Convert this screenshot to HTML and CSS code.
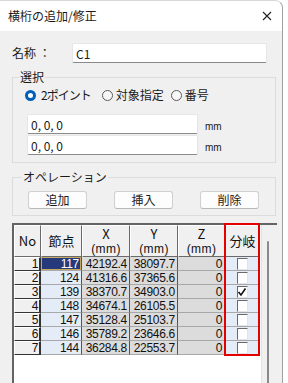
FILE: index.html
```html
<!DOCTYPE html>
<html>
<head>
  <meta charset="UTF-8">
  <title>横桁の追加/修正</title>
  <link rel="stylesheet" href="styles.css">
</head>
<body>
  <div class="window">
    <div class="titlebar">
      <span class="title">横桁の追加/修正</span>
      <svg class="close" width="10" height="10" viewBox="0 0 10 10">
        <path d="M1 1 L9 9 M9 1 L1 9" stroke="#222" stroke-width="1.1" fill="none"/>
      </svg>
    </div>

    <div class="content">
      <div class="name-row">
        <span class="name-label">名称 ：</span>
        <input class="textbox name-box" type="text" value="C1">
      </div>

      <fieldset class="group">
        <legend>選択</legend>
        <div class="radios">
          <label class="radio first"><span class="dot on"></span>2ポイント</label>
          <label class="radio"><span class="dot"></span>対象指定</label>
          <label class="radio"><span class="dot"></span>番号</label>
        </div>
        <div class="point-row first">
          <input class="textbox point-box" type="text" value="0, 0, 0">
          <span class="unit">mm</span>
        </div>
        <div class="point-row">
          <input class="textbox point-box" type="text" value="0, 0, 0">
          <span class="unit">mm</span>
        </div>
      </fieldset>

      <fieldset class="group ops">
        <legend>オペレーション</legend>
        <div class="buttons">
          <button>追加</button>
          <button>挿入</button>
          <button>削除</button>
        </div>
      </fieldset>

      <div class="grid">
        <div class="cells">
          <table>
            <colgroup>
              <col class="c-no"><col class="c-node"><col class="c-x"><col class="c-y"><col class="c-z"><col class="c-br">
            </colgroup>
            <thead>
              <tr>
                <th>No</th>
                <th>節点</th>
                <th>X<br><span class="mm">(mm)</span></th>
                <th>Y<br><span class="mm">(mm)</span></th>
                <th>Z<br><span class="mm">(mm)</span></th>
                <th>分岐</th>
              </tr>
            </thead>
            <tbody id="rows"></tbody>
          </table>
          <div class="highlight"></div>
        </div>
        <div class="scroll"><div class="thumb"></div></div>
      </div>
    </div>
  </div>

  <script>
  const rows = [
    [1, 117, "42192.4", "38097.7", 0, false],
    [2, 124, "41316.6", "37365.6", 0, false],
    [3, 139, "38370.7", "34903.0", 0, true],
    [4, 148, "34674.1", "26105.5", 0, false],
    [5, 147, "35128.4", "25103.7", 0, false],
    [6, 146, "35789.2", "23646.6", 0, false],
    [7, 144, "36284.8", "22553.7", 0, false]
  ];
  const body = document.getElementById("rows");
  rows.forEach(r => {
    const tr = body.insertRow();
    const check = r[5]
      ? '<span class="check"><svg width="10" height="10" viewBox="0 0 10 10"><path d="M1.5 5 L4 8 L8.5 1.5" stroke="#111" stroke-width="1.6" fill="none"/></svg></span>'
      : '<span class="check"></span>';
    tr.innerHTML = `
      <td class="no">${r[0]}</td>
      <td class="node${r[0] === 1 ? ' sel' : ''}">${r[1]}</td>
      <td class="num">${r[2]}</td>
      <td class="num">${r[3]}</td>
      <td class="num">${r[4]}</td>
      <td class="br">${check}</td>
    `;
  });
  </script>
</body>
</html>
```

FILE: styles.css
```css
html, body{
  margin: 0;
  padding: 0;
  background: #fff;
}
body{
  font-family: "Noto Sans CJK JP", "Noto Sans", sans-serif;
  font-size: 12px;
  color: #1a1a1a;
}
.window{
  width: 283px;
  height: 383px;
  border-right: 1px solid #a0a0a0;
  border-top: 1px solid #d8d8d8;
  border-top-right-radius: 8px;
  box-sizing: border-box;
  overflow: hidden;
  background: #f0f0f0;
}
.titlebar{
  height: 30px;
  background: #fff;
  display: flex;
  align-items: center;
  justify-content: space-between;
  padding: 0 8px 0 8px;
}
.title{
  font-size: 12px;
  line-height: 14px;
}
.close{
  margin-right: 2px;
}
.content{
  padding: 12px 6px 0 12px;
}

/* name */
.name-row{
  display: flex;
  align-items: center;
  height: 20px;
}
.name-label{
  width: 60px;
  line-height: 14px;
}
.textbox{
  font-family: "Noto Sans CJK JP", "Noto Sans", sans-serif;
  font-size: 12px;
  color: #1a1a1a;
  height: 20px;
  box-sizing: border-box;
  padding: 0 3px;
  margin: 0;
  background: #fff;
  border: 1px solid #e6e6e6;
  border-bottom: 1px solid #8a8a8a;
  border-radius: 2px;
  outline: none;
}
.name-box{
  width: 195px;
}

/* group boxes */
.group{
  margin: 7px 0 0 0;
  padding: 0 0 7px 12px;
  width: 264px;
  box-sizing: border-box;
  border: 1px solid #dcdcdc;
  border-radius: 0;
}
.group legend{
  padding: 0 1px;
  margin-left: -6px;
  line-height: 14px;
  font-size: 12px;
}
.radios{
  display: flex;
  align-items: center;
  height: 16px;
  margin-top: 3px;
}
.radio{
  display: flex;
  align-items: center;
  line-height: 14px;
  margin-right: 7px;
}
.dot{
  width: 11px;
  height: 11px;
  box-sizing: border-box;
  border: 1px solid #5a5a5a;
  border-radius: 50%;
  background: #f7f7f7;
  margin-right: 3px;
}
.dot.on{
  border: 3px solid #005fb8;
  background: #fff;
}
.radio.first{
  letter-spacing: -1px;
  margin-right: 11px;
}
.radio.first .dot{
  margin-right: 5px;
}
.point-row{
  display: flex;
  align-items: flex-end;
  margin-left: 2px;
  margin-top: 1px;
}
.point-row.first{
  margin-top: 11px;
}
.point-box{
  width: 171px;
}
.unit{
  font-family: "Liberation Sans", sans-serif;
  font-size: 10px;
  line-height: 12px;
  margin-left: 7px;
  margin-bottom: 1px;
}
.ops{
  padding: 0 16px 6px 15px;
}
.buttons{
  display: flex;
  justify-content: space-between;
  margin-top: 7px;
}
.buttons button{
  width: 59px;
  height: 18px;
  padding: 0;
  font-family: "Noto Sans CJK JP", sans-serif;
  font-size: 12px;
  line-height: 14px;
  color: #1a1a1a;
  background: #fdfdfd;
  border: 1px solid #d0d0d0;
  border-bottom-color: #b8b8b8;
  border-radius: 3px;
}

/* grid */
.grid{
  margin-top: 7px;
  width: 265px;
  height: 175px;
  box-sizing: border-box;
  border-top: 2px solid #646464;
  border-left: 2px solid #646464;
  background: #fff;
  display: flex;
  position: relative;
}
.cells{
  width: 248px;
}
table{
  border-collapse: separate;
  border-spacing: 0;
  table-layout: fixed;
  width: 246px;
  font-family: "Liberation Sans", sans-serif;
}
.c-no{ width: 27px; }
.c-node{ width: 41px; }
.c-x{ width: 48px; }
.c-y{ width: 48px; }
.c-z{ width: 47px; }
.c-br{ width: 35px; }
th{
  height: 32px;
  padding: 0;
  box-sizing: border-box;
  background: #f0f0f0;
  border-top: 1px solid #fff;
  border-left: 1px solid #fff;
  border-right: 1px solid #6a6a6a;
  border-bottom: 1px solid #6a6a6a;
  font-weight: normal;
  font-size: 13px;
  line-height: 14px;
  font-family: "Noto Sans CJK JP", sans-serif;
  color: #111;
}
th .mm{
  font-family: "Liberation Sans", sans-serif;
  font-size: 12px;
  letter-spacing: 0.4px;
}
td{
  height: 14px;
  padding: 0 2px 0 0;
  box-sizing: border-box;
  font-size: 12px;
  line-height: 12px;
  letter-spacing: -0.3px;
  text-align: right;
  color: #111;
  border-bottom: 1px solid #a8a8a8;
  border-right: 1px solid #555;
  white-space: nowrap;
  overflow: hidden;
}
td.no{
  background: #f0f0f0;
  border-top: 1px solid #fff;
  border-left: 1px solid #fff;
  border-right: 2px solid #333;
  border-bottom: 1px solid #333;
  padding-right: 1px;
}
td.node{
  background: #e4ecf7;
}
td.node.sel{
  background: #25397b;
  color: #fff;
  box-shadow: inset 0 0 0 1px #c5a963;
}
td.num{
  background: #dcdcdc;
}
td.br{
  background: #e4ecf7;
  text-align: center;
  padding: 0;
}
.check{
  display: inline-block;
  vertical-align: top;
  width: 11px;
  height: 12px;
  box-sizing: border-box;
  margin-top: 1px;
  background: #fff;
  border-top: 1px solid #6a6a6a;
  border-left: 1px solid #6a6a6a;
  border-right: 1px solid #e4e4e4;
  border-bottom: 1px solid #e4e4e4;
}
.check svg{
  display: block;
  margin: 0 0 0 -1px;
}
.highlight{
  position: absolute;
  left: 210px;
  top: -2px;
  width: 36px;
  height: 133px;
  box-sizing: border-box;
  border: 2px solid #e50000;
}
.scroll{
  width: 15px;
  background: #f0f0f0;
  border-left: 1px solid #e2e2e2;
  position: relative;
}
.thumb{
  margin: 16px 0 0 5px;
  width: 2px;
  height: 150px;
  background: #8a8a8a;
  border-radius: 1px;
}
```
